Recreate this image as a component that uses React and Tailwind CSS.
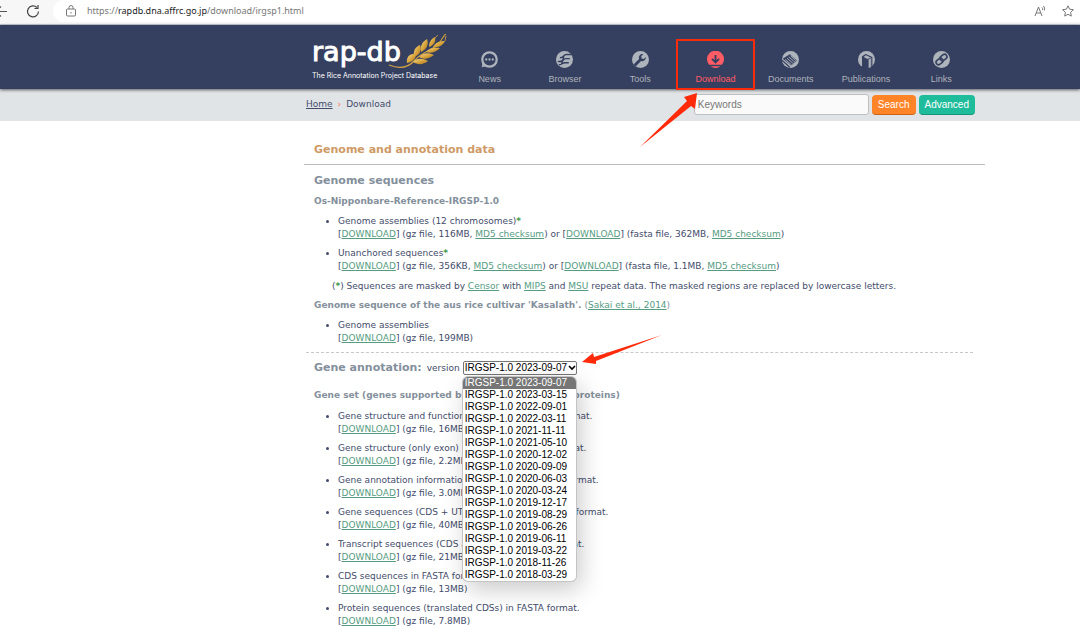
import React, { useState } from "react";
import clsx from "clsx";

const versions = [
  "2023-09-07",
  "2023-03-15",
  "2022-09-01",
  "2022-03-11",
  "2021-11-11",
  "2021-05-10",
  "2020-12-02",
  "2020-09-09",
  "2020-06-03",
  "2020-03-24",
  "2019-12-17",
  "2019-08-29",
  "2019-06-26",
  "2019-06-11",
  "2019-03-22",
  "2018-11-26",
  "2018-03-29",
];

const geneFiles = [
  { title: "Gene structure and function information in GFF3 format.", size: "16MB" },
  { title: "Gene structure (only exon) information in GFF3 format.", size: "2.2MB" },
  { title: "Gene annotation information in tab-delimited text format.", size: "3.0MB" },
  { title: "Gene sequences (CDS + UTRs and introns) in FASTA format.", size: "40MB" },
  { title: "Transcript sequences (CDS and UTRs) in FASTA format.", size: "21MB" },
  { title: "CDS sequences in FASTA format.", size: "13MB" },
  { title: "Protein sequences (translated CDSs) in FASTA format.", size: "7.8MB" },
];

// Navigation icons: a filled disc with the symbol cut out in the bar colour
const navIcons = {
  News: (
    <>
      <circle cx="12" cy="12" r="10.2" fill="none" stroke="currentColor" strokeWidth="3.2" />
      <path d="M1 23l1.500-8 6 6z" fill="currentColor" />
      <circle cx="7.4" cy="12" r="1.6" fill="currentColor" />
      <circle cx="12" cy="12" r="1.6" fill="currentColor" />
      <circle cx="16.6" cy="12" r="1.6" fill="currentColor" />
    </>
  ),
  Browser: (
    <>
      <circle cx="12" cy="12" r="12" fill="currentColor" />
      <path
        d="M22 5h-7c-2.500 0-3.500 1-4.500 2.400S8 9.500 5.500 9.500M19.500 10.800h-5.500c-2.500 0-3 1-4 2.200S6.500 15 2.500 15M18 16.500h-6c-2.500 0-3 3-8 3M11 8l-3 10"
        fill="none"
        stroke="#353f5f"
        strokeWidth="2"
      />
    </>
  ),
  Tools: (
    <>
      <circle cx="12" cy="12" r="12" fill="currentColor" />
      <path
        d="M19.500 8.500a5 5 0 0 1-6.700 5.500L6.500 20.500a2 2 0 0 1-3-3L10 11.200A5 5 0 0 1 16 4.500l-3 3 .700 3 3 .700z"
        fill="#353f5f"
      />
    </>
  ),
  Download: (
    <>
      <path d="M3 19.500A12 12 0 1 1 21 19.500z" fill="currentColor" />
      <path d="M5 21.500h14a12 12 0 0 1-14 0z" fill="currentColor" />
      <path d="M12 5.500v10M7 11l5 5 5-5" fill="none" stroke="#353f5f" strokeWidth="2.600" />
    </>
  ),
  Documents: (
    <>
      <circle cx="12" cy="12" r="12" fill="currentColor" />
      <path d="M1 11L11 4.500l10 9-8 7z" fill="#353f5f" />
      <path
        d="M4.500 12l9 7.500M7 10.200l9 7.500M9.500 8.400l9 7.500M12 6.800l8 7"
        stroke="currentColor"
        strokeWidth="1.300"
      />
      <path d="M0 13l11 10" stroke="#353f5f" strokeWidth="1.600" />
    </>
  ),
  Publications: (
    <>
      <circle cx="12" cy="12" r="12" fill="currentColor" />
      <path d="M7 9l5.500 3L18 9v15H7z" fill="#353f5f" />
      <path d="M9 24V11l4.500 2v11z" fill="currentColor" opacity="0" />
      <path
        d="M6.500 23V8L11 5l8.500 4v12M11 5L6.500 8.500l7 3.500v12"
        fill="none"
        stroke="#353f5f"
        strokeWidth="1.600"
      />
      <path d="M15 12l3-1.800V23l-3 1z" fill="currentColor" />
    </>
  ),
  Links: (
    <>
      <circle cx="12" cy="12" r="12" fill="currentColor" />
      <g fill="none" stroke="#353f5f" strokeWidth="2.200">
        <rect x="9.500" y="5.500" width="10.500" height="7" rx="3.500" transform="rotate(-38 15 9)" />
        <rect x="4" y="11.500" width="10.500" height="7" rx="3.500" transform="rotate(-38 9 15)" />
      </g>
    </>
  ),
};

const navItems = Object.keys(navIcons);

function BrowserBar() {
  return (
    <div className="flex h-[25px] items-start border-b border-[#c9ced6] bg-[#f7f7f7]">
      <button type="button" aria-label="Back" className="mt-1 h-4 w-2 overflow-hidden">
        <svg viewBox="0 0 8 16" className="h-4 w-2" fill="none" stroke="#555" strokeWidth="1.200">
          <path d="M-4 7.500H7M-4 7.500l5-5M-4 7.500l5 5" />
        </svg>
      </button>
      <button type="button" aria-label="Refresh" className="mt-1 ml-[17px] h-4 w-4">
        <svg viewBox="0 0 16 16" className="h-4 w-4" fill="none" stroke="#444" strokeWidth="1.200">
          <path d="M13.500 7.500a5.500 5.500 0 1 1-1.600-4M13 1v3.500H9.500" />
        </svg>
      </button>
      <div className="ml-3 flex h-[22px] flex-1 items-center rounded-l-full bg-white pr-[6px] pl-3">
        <svg viewBox="0 0 12 12" className="h-3 w-3" fill="none" stroke="#777">
          <rect x="1.500" y="4" width="9" height="7" rx="1" />
          <path d="M4 4V2.500a2 2 0 0 1 4 0V4M6 7v1.500" />
        </svg>
        <p className="ml-[10px] flex-1 font-['Noto_Sans',sans-serif] text-[9px] leading-3 text-[#777]">
          https://<span className="text-[#222]">rapdb.dna.affrc.go.jp</span>/download/irgsp1.html
        </p>
        <button type="button" aria-label="Read aloud" className="h-3 w-3">
          <svg viewBox="0 0 12 12" className="h-3 w-3" fill="none" stroke="#777">
            <path d="M1 11L4.500 2 8 11M2.200 8h4.600M8 2.500q1 1 .500 2.500M9.500 1q1.800 2 .800 4.500" />
          </svg>
        </button>
        <button type="button" aria-label="Add to favorites" className="ml-4 h-3 w-3">
          <svg viewBox="0 0 12 12" className="h-3 w-3" fill="none" stroke="#777">
            <path d="M6 .800l1.600 3.400 3.800.500-2.800 2.600.700 3.800L6 9.300l-3.300 1.800.700-3.800L.600 4.700l3.800-.500z" />
          </svg>
        </button>
      </div>
    </div>
  );
}

function Wheat() {
  return (
    <svg viewBox="0 0 62 36" className="absolute top-0 left-[81px] h-9 w-[62px]">
      <defs>
        <linearGradient id="grain" x1="0" y1="0" x2="1" y2="1">
          <stop offset="0" stopColor="#f6dc92" />
          <stop offset="0.500" stopColor="#d9a53c" />
          <stop offset="1" stopColor="#a87420" />
        </linearGradient>
      </defs>
      <path
        d="M4 32C16 37 24 34 30 27S45 18 54 11"
        fill="none"
        stroke="#d2a044"
        strokeWidth="1.200"
      />
      <g fill="url(#grain)">
        <path d="M22 30c-1-6 3-10 9-9 0 5-4 8-9 9z" />
        <path d="M29 24c-1-6 1-10 6-12 2 5 0 10-6 12z" />
        <path d="M36 19c-1-6 1-10 6-13 2 5 0 10-6 13z" />
        <path d="M44 14c0-5 2-8 6-10 1 5-1 8-6 10z" />
        <path d="M28 29c4-4 9-4 15-1-5 4-10 4-15 1z" />
        <path d="M34 24c4-4 9-5 15-2-5 4-10 5-15 2z" />
        <path d="M41 19c3-4 8-5 14-4-4 4-9 6-14 4z" />
        <path d="M48 14c2-4 6-6 12-6-2 4-6 7-12 6z" />
      </g>
      <path d="M50 5l3-3M55 9l5-8M60 8l1-5M53 11l8-10" stroke="#d9a53c" strokeWidth="0.800" />
    </svg>
  );
}

function Header({ active }) {
  return (
    <header className="relative z-10 bg-[#353f5f] pr-[101px] pl-[304px] font-['Liberation_Sans',sans-serif] shadow-[0_1px_3px_rgba(0,0,0,0.6)]">
      <div className="flex h-16">
        <a href="#home" className="relative mt-2 w-[148px] pl-2 text-white">
          <span className="block font-['DejaVu_Sans',sans-serif] text-[27px] leading-[38px] [-webkit-text-stroke:1px_white]">
            rap-db
          </span>
          <span className="block font-['Inter',sans-serif] text-[7px] leading-[9px] whitespace-nowrap">
            The Rice Annotation Project Database
          </span>
          <Wheat />
        </a>
        <nav className="grid flex-1 grid-cols-7">
          {navItems.map((name) => (
            <a
              key={name}
              href={`#${name.toLowerCase()}`}
              className={clsx(
                "relative flex flex-col items-center pt-[26px] text-[9px] leading-3",
                name === active ? "text-[#ff5c66]" : "text-[#aeb4bb]"
              )}
            >
              <svg viewBox="0 0 24 24" className="mb-[5px] h-[17px] w-[17px]">
                {navIcons[name]}
              </svg>
              {name}
              {name === active && <DownloadCallout />}
            </a>
          ))}
        </nav>
      </div>
    </header>
  );
}

// Red frame and arrow that point out the download tab
function DownloadCallout() {
  return (
    <>
      <span className="absolute -inset-x-[2px] top-[14px] -bottom-[1px] border-2 border-[#f92b0b]" />
      <svg viewBox="0 0 60 56" className="absolute top-[67px] -left-[39px] h-14 w-[60px]">
        <path d="M58 1L45 5l3 4L1 55 52 14l4 3z" fill="#ff2a0a" />
      </svg>
    </>
  );
}

function SubHeader() {
  return (
    <div className="flex h-8 items-start bg-[#e0e4e7] pr-[105px] pl-[306px]">
      <p className="mt-2 flex-1 text-[9px] leading-[14px] text-[#434c6b]">
        <a href="#home" className="underline">
          Home
        </a>
        <span className="mx-[5px] text-[#ff7043]">›</span>
        Download
      </p>
      <form
        className="mt-[5px] flex gap-[3px] font-['Liberation_Sans',sans-serif] text-[10px]"
        onSubmit={(e) => e.preventDefault()}
      >
        <input
          type="text"
          aria-label="Keywords"
          placeholder="Keywords"
          className="h-[21px] w-[175px] rounded-[3px] border border-[#bfbfbf] bg-[#fafafa] px-[3px] placeholder:text-[#777]"
        />
        <button
          type="submit"
          className="mt-px h-5 rounded-[4px] border-b border-[#c8651a] bg-[#ff8427] px-[6px] text-white"
        >
          Search
        </button>
        <button
          type="button"
          className="mt-px h-5 rounded-[4px] border-b border-[#15957a] bg-[#1fbc9c] px-[6px] text-white"
        >
          Advanced
        </button>
      </form>
    </div>
  );
}

function TextLink({ children }) {
  return (
    <a href="#file" className="text-[#559c82] underline">
      {children}
    </a>
  );
}

function Star() {
  return <span className="font-bold text-[#3f9a45]">*</span>;
}

function Assembly({ title, gz, fasta }) {
  return (
    <li>
      {title}
      <Star />
      <br />[<TextLink>DOWNLOAD</TextLink>] (gz file, {gz}, <TextLink>MD5 checksum</TextLink>) or [
      <TextLink>DOWNLOAD</TextLink>] (fasta file, {fasta}, <TextLink>MD5 checksum</TextLink>)
    </li>
  );
}

function VersionSelect() {
  const [version, setVersion] = useState(versions[0]);

  return (
    <div className="relative ml-[3px] font-['Liberation_Sans',sans-serif] text-[10px] text-black">
      <select
        id="version"
        value={version}
        onChange={(e) => setVersion(e.target.value)}
        className="block h-[14px] w-[114px] appearance-none rounded-[2px] border border-[#767676] bg-white pl-px leading-3"
      >
        {versions.map((v) => (
          <option key={v} value={v}>
            IRGSP-1.0 {v}
          </option>
        ))}
      </select>
      <svg
        viewBox="0 0 8 6"
        className="pointer-events-none absolute top-1 right-px h-[6px] w-2"
        fill="none"
        stroke="black"
        strokeWidth="1.600"
      >
        <path d="M1 1l3 3 3-3" />
      </svg>

      {/* Open list */}
      <ul
        role="listbox"
        aria-label="version"
        className="absolute top-4 left-0 z-10 w-[113px] overflow-hidden rounded-[5px] bg-white shadow-[4px_8px_24px_rgba(0,0,0,0.22)] ring-1 ring-[#c4c4c4]"
      >
        {versions.map((v) => (
          <li
            key={v}
            role="option"
            aria-selected={v === version}
            onClick={() => setVersion(v)}
            className={clsx("pl-[2px] leading-3", v === version && "bg-[#767676] text-white")}
          >
            IRGSP-1.0 {v}
          </li>
        ))}
      </ul>

      <svg viewBox="0 0 82 32" className="absolute -top-[27px] left-[118px] h-8 w-[82px]">
        <path d="M1 28l11-9 1 4L81 1 15 27v3z" fill="#ff2a0a" />
      </svg>
    </div>
  );
}

function App() {
  return (
    <div className="min-h-screen bg-white font-['DejaVu_Sans',sans-serif] text-[#434c6b]">
      <BrowserBar />
      <Header active="Download" />
      <SubHeader />

      <main className="pr-[95px] pb-2 pl-[304px] text-[9px] leading-[13px]">
        <h1 className="border-b border-[#bdbdbd] pt-[22px] pb-[7px] pl-[10px] text-[11px] leading-[14px] font-bold text-[#cf9a66]">
          Genome and annotation data
        </h1>

        <section className="mr-3 ml-[2px] border-b border-dashed border-[#c8c8c8] pb-[7px] pl-2">
          <h2 className="mt-[9px] text-[11px] leading-[14px] font-bold text-[#84909c]">
            Genome sequences
          </h2>
          <h3 className="mt-[7px] font-bold text-[#84909c]">Os-Nipponbare-Reference-IRGSP-1.0</h3>
          <ul className="mt-[7px] flex list-disc flex-col gap-[6px] pl-6">
            <Assembly title="Genome assemblies (12 chromosomes)" gz="116MB" fasta="362MB" />
            <Assembly title="Unanchored sequences" gz="356KB" fasta="1.1MB" />
          </ul>
          <p className="mt-[7px] pl-[18px]">
            (<Star />) Sequences are masked by <TextLink>Censor</TextLink> with{" "}
            <TextLink>MIPS</TextLink> and <TextLink>MSU</TextLink> repeat data. The masked regions
            are replaced by lowercase letters.
          </p>
          <h3 className="mt-[6px] font-bold text-[#84909c]">
            Genome sequence of the aus rice cultivar 'Kasalath'.{" "}
            <span className="font-normal">
              (<TextLink>Sakai et al., 2014</TextLink>)
            </span>
          </h3>
          <ul className="mt-[7px] list-disc pl-6">
            <li>
              Genome assemblies
              <br />[<TextLink>DOWNLOAD</TextLink>] (gz file, 199MB)
            </li>
          </ul>
        </section>

        <section className="pl-[10px]">
          <div className="mt-2 flex items-center">
            <h2 className="text-[11px] leading-[14px] font-bold text-[#84909c]">
              Gene annotation:
            </h2>
            <label htmlFor="version" className="ml-[5px]">
              version
            </label>
            <VersionSelect />
          </div>
          <h3 className="mt-[14px] font-bold text-[#84909c]">
            Gene set (genes supported by FL-cDNAs, ESTs and proteins)
          </h3>
          <ul className="mt-2 flex list-disc flex-col gap-[6px] pl-6">
            {geneFiles.map((file) => (
              <li key={file.title}>
                {file.title}
                <br />[<TextLink>DOWNLOAD</TextLink>] (gz file, {file.size})
              </li>
            ))}
          </ul>
        </section>
      </main>
    </div>
  );
}

export default App;
